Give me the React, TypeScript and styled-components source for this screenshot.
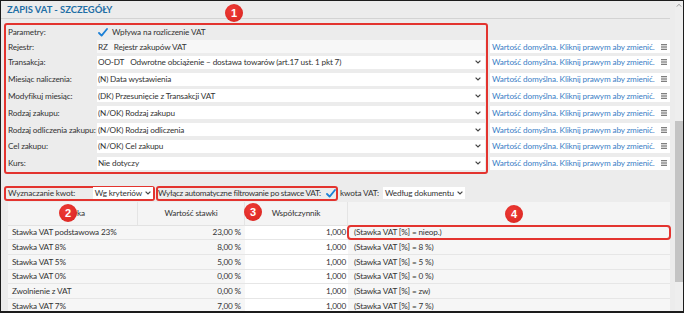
import React from 'react';
import styled, { createGlobalStyle } from 'styled-components';

const FONT = `Lato, "Noto Sans", "Liberation Sans", sans-serif`;
const RED = '#e3342f';

const GlobalStyle = createGlobalStyle`
  html, body { margin: 0; padding: 0; background: #ececec; }
  #root { width: 684px; height: 313px; }
`;

const Frame = styled.div`
  position: relative;
  width: 684px;
  height: 313px;
  box-sizing: border-box;
  border: 1px solid #1c1c1c;
  border-bottom-width: 2px;
  background: #ececec;
  display: flex;
  overflow: hidden;
  font-family: ${FONT};
  font-size: 8.2px;
  letter-spacing: -0.15px;
  color: #333;
`;

const Content = styled.div`
  flex: 1;
  min-width: 0;
  padding: 0 5px 0 3px;
`;

const TitleBar = styled.div`
  height: 17px;
  margin-left: -3px;
  padding-left: 6px;
  border-bottom: 1px solid #d3d3d3;
  display: flex;
  align-items: center;
  font-weight: 700;
  font-size: 9.4px;
  letter-spacing: 0;
  color: #1f6fa6;
`;

const FormArea = styled.div`
  margin-top: 4px;
  display: flex;
  align-items: flex-start;
`;

const FormBox = styled.div`
  width: 484px;
  box-sizing: border-box;
  border: 2px solid ${RED};
  border-radius: 3px;
  padding: 0 1px 0 2px;
`;

const Row = styled.div<{ $h: number }>`
  height: ${p => p.$h}px;
  display: flex;
  align-items: center;
`;

const Label = styled.div`
  width: 89px;
  flex: none;
  white-space: nowrap;
`;

const Field = styled.div<{ $tone?: 'white' | 'readonly' | 'none' }>`
  flex: 1;
  height: 13px;
  display: flex;
  align-items: center;
  padding: 0 4px 0 1px;
  background: ${p => (p.$tone === 'readonly' ? '#f7f7f7' : p.$tone === 'none' ? 'transparent' : '#fff')};
  white-space: nowrap;
  overflow: hidden;
`;

const Code = styled.span`
  margin-right: 6px;
`;

const Grow = styled.span`
  flex: 1;
  min-width: 0;
`;

const HintColumn = styled.div`
  margin-left: 2px;
  width: 180px;
  padding-top: 16px;
`;

const Hint = styled.div`
  flex: 1;
  height: 13px;
  background: #fff;
  display: flex;
  align-items: center;
  padding: 0 3px 0 2px;
  color: #3a80c6;
  white-space: nowrap;
`;

const Toolbar = styled.div`
  margin-top: 12px;
  height: 15px;
  display: flex;
  align-items: center;
`;

const Marked = styled.div<{ $w: number }>`
  width: ${p => p.$w}px;
  height: 15px;
  box-sizing: border-box;
  border: 2px solid ${RED};
  border-radius: 3px;
  display: flex;
  align-items: center;
  white-space: nowrap;
`;

const TightText = styled.span`
  flex: 1;
  letter-spacing: -0.3px;
`;

const Dropdown = styled.div<{ $w?: number }>`
  ${p => (p.$w ? `width: ${p.$w}px;` : '')}
  height: 12px;
  box-sizing: border-box;
  background: #fff;
  display: flex;
  align-items: center;
  gap: 3px;
  padding: 0 2px 0 2px;
  white-space: nowrap;
  svg { flex: none; }
`;

const Plain = styled.span<{ $ml?: number }>`
  margin-left: ${p => p.$ml ?? 0}px;
  white-space: nowrap;
`;

const Table = styled.div`
  margin: 1px 0 0 4px;
`;

const COLS = '130px 107px 103px 1fr';

const HeadRow = styled.div`
  display: grid;
  grid-template-columns: ${COLS};
  height: 23px;
  background: #f4f4f4;
  border-bottom: 1px solid #e2e2e2;
`;

const HeadCell = styled.div`
  display: flex;
  align-items: center;
  justify-content: center;
  border-right: 1px solid #e4e4e4;
  &:last-child { border-right: none; }
`;

const DataRow = styled.div`
  display: grid;
  grid-template-columns: ${COLS};
  height: 14.7px;
  box-sizing: border-box;
  background: #f6f6f6;
  border-bottom: 1px solid #e6e6e6;
`;

const Cell = styled.div<{ $align?: 'left' | 'right'; $white?: boolean; $pad?: number; $marked?: boolean }>`
  display: flex;
  align-items: center;
  justify-content: ${p => (p.$align === 'right' ? 'flex-end' : 'flex-start')};
  padding: ${p => (p.$align === 'right' ? `0 ${p.$pad ?? 4}px 0 0` : `0 0 0 ${p.$pad ?? 4}px`)};
  background: ${p => (p.$white ? '#fff' : 'transparent')};
  white-space: nowrap;
  border-radius: ${p => (p.$marked ? '3px' : '0')};
  outline: ${p => (p.$marked ? `2px solid ${RED}` : 'none')};
  outline-offset: -1px;
`;

const Scrollbar = styled.div`
  width: 8px;
  flex: none;
  background: #eeeeee;
  display: flex;
  flex-direction: column;
  align-items: center;
`;

const Thumb = styled.div`
  margin-top: 113px;
  width: 8px;
  height: 161px;
  background: #c4c4c4;
`;

const Badge = styled.div<{ $x: number; $y: number }>`
  position: absolute;
  left: ${p => p.$x}px;
  top: ${p => p.$y}px;
  width: 18px;
  height: 18px;
  border-radius: 50%;
  background: radial-gradient(circle at 40% 35%, #ee3b36, #d8241f);
  color: #fff;
  font-family: "Liberation Sans", sans-serif;
  font-size: 11px;
  letter-spacing: 0;
  font-weight: 700;
  display: flex;
  align-items: center;
  justify-content: center;
`;

const Chevron = () => (
  <svg width="6" height="4" viewBox="0 0 6 4">
    <path d="M0.6 0.6 L3 3 L5.4 0.6" fill="none" stroke="#444" strokeWidth="1.2" />
  </svg>
);

const Check = () => (
  <svg width="10" height="9" viewBox="0 0 10 9" style={{ flex: 'none' }}>
    <path d="M1 5 L3.6 7.6 L9 1" fill="none" stroke="#1c80d6" strokeWidth="1.8" strokeLinecap="round" strokeLinejoin="round" />
  </svg>
);

const MenuIcon = () => (
  <svg width="6" height="6" viewBox="0 0 6 6">
    <path d="M0 0.75 H6 M0 3 H6 M0 5.25 H6" stroke="#555" strokeWidth="1" />
  </svg>
);

const HINT = 'Wartość domyślna. Kliknij prawym aby zmienić.';
const SEL_H = 16.8;

const selects: { label: string; code?: string; text: string }[] = [
  { label: 'Transakcja:', code: 'OO-DT', text: 'Odwrotne obciążenie – dostawa towarów (art.17 ust. 1 pkt 7)' },
  { label: 'Miesiąc naliczenia:', text: '(N) Data wystawienia' },
  { label: 'Modyfikuj miesiąc:', text: '(DK) Przesunięcie z Transakcji VAT' },
  { label: 'Rodzaj zakupu:', text: '(N/OK) Rodzaj zakupu' },
  { label: 'Rodzaj odliczenia zakupu:', text: '(N/OK) Rodzaj odliczenia' },
  { label: 'Cel zakupu:', text: '(N/OK) Cel zakupu' },
  { label: 'Kurs:', text: 'Nie dotyczy' },
];

const rates = [
  { name: 'Stawka VAT podstawowa 23%', value: '23,00 %', cond: '(Stawka VAT [%] = nieop.)' },
  { name: 'Stawka VAT 8%', value: '8,00 %', cond: '(Stawka VAT [%] = 8 %)' },
  { name: 'Stawka VAT 5%', value: '5,00 %', cond: '(Stawka VAT [%] = 5 %)' },
  { name: 'Stawka VAT 0%', value: '0,00 %', cond: '(Stawka VAT [%] = 0 %)' },
  { name: 'Zwolnienie z VAT', value: '0,00 %', cond: '(Stawka VAT [%] = zw)' },
  { name: 'Stawka VAT 7%', value: '7,00 %', cond: '(Stawka VAT [%] = 7 %)' },
];

export default function App() {
  return (
    <Frame>
      <GlobalStyle />
      <Content>
        <TitleBar>ZAPIS VAT - SZCZEGÓŁY</TitleBar>

        <FormArea>
          <FormBox>
            <Row $h={14}>
              <Label>Parametry:</Label>
              <Field $tone="none">
                <Check />
                <Plain $ml={4}>Wpływa na rozliczenie VAT</Plain>
              </Field>
            </Row>
            <Row $h={15}>
              <Label>Rejestr:</Label>
              <Field $tone="readonly">
                <Code>RZ</Code>
                Rejestr zakupów VAT
              </Field>
            </Row>
            {selects.map(s => (
              <Row $h={SEL_H} key={s.label}>
                <Label>{s.label}</Label>
                <Field>
                  {s.code && <Code>{s.code}</Code>}
                  <Grow>{s.text}</Grow>
                  <Chevron />
                </Field>
              </Row>
            ))}
          </FormBox>

          <HintColumn>
            <Row $h={15}>
              <Hint>
                <Grow>{HINT}</Grow>
                <MenuIcon />
              </Hint>
            </Row>
            {selects.map(s => (
              <Row $h={SEL_H} key={s.label}>
                <Hint>
                  <Grow>{HINT}</Grow>
                  <MenuIcon />
                </Hint>
              </Row>
            ))}
          </HintColumn>
        </FormArea>

        <Toolbar>
          <Marked $w={151}>
            <Plain $ml={2} style={{ width: 88 }}>Wyznaczanie kwot:</Plain>
            <Dropdown>
              <span>Wg kryteriów</span>
              <Chevron />
            </Dropdown>
          </Marked>
          <Marked $w={182} style={{ marginLeft: 1 }}>
            <TightText>Wyłącz automatyczne filtrowanie po stawce VAT:</TightText>
            <Check />
          </Marked>
          <Plain $ml={2}>kwota VAT:</Plain>
          <Dropdown style={{ marginLeft: 4 }}>
            <span>Według dokumentu</span>
            <Chevron />
          </Dropdown>
        </Toolbar>

        <Table>
          <HeadRow>
            <HeadCell>Stawka</HeadCell>
            <HeadCell>Wartość stawki</HeadCell>
            <HeadCell>Współczynnik</HeadCell>
            <HeadCell />
          </HeadRow>
          {rates.map((r, i) => (
            <DataRow key={r.name}>
              <Cell>{r.name}</Cell>
              <Cell $align="right">{r.value}</Cell>
              <Cell $align="right" $white $pad={2}>1,000</Cell>
              <Cell $pad={6} $marked={i === 0}>{r.cond}</Cell>
            </DataRow>
          ))}
        </Table>
      </Content>

      <Scrollbar>
        <svg width="6" height="5" viewBox="0 0 6 5" style={{ marginTop: 2 }}>
          <path d="M0.8 3.6 L3 1.2 L5.2 3.6" fill="none" stroke="#9a9a9a" strokeWidth="1" />
        </svg>
        <Thumb />
      </Scrollbar>

      <Badge $x={224} $y={3}>1</Badge>
      <Badge $x={58} $y={203}>2</Badge>
      <Badge $x={243} $y={202}>3</Badge>
      <Badge $x={504} $y={204}>4</Badge>
    </Frame>
  );
}
